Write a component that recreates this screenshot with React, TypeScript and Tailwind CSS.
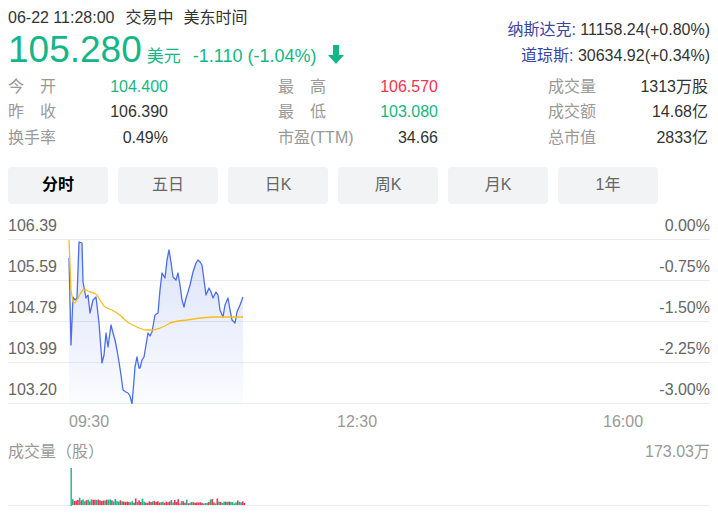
import React from "react";

const blue: [number, number][] = [
  [69, 258], [71, 345], [73, 297], [75, 300], [77, 298], [79, 242], [82, 243], [83, 282], [86, 298], [88, 295],
  [90, 313], [93, 300], [96, 297], [99, 323], [102, 363], [104, 355], [106, 333], [108, 347], [111, 325], [113, 333],
  [115, 340], [117, 350], [119, 362], [121, 375], [123, 390], [126, 392], [128, 393], [130, 396], [132, 404], [134, 380],
  [135, 367], [137, 357], [139, 368], [140, 368], [142, 360], [144, 357], [146, 345], [148, 333], [150, 336], [152, 332],
  [155, 315], [158, 313], [160, 290], [162, 273], [165, 278], [167, 260], [169, 250], [171, 262], [173, 277], [176, 280],
  [178, 273], [180, 285], [182, 300], [184, 307], [186, 298], [188, 292], [190, 285], [193, 272], [196, 263], [198, 260],
  [200, 262], [202, 265], [204, 280], [206, 295], [209, 288], [211, 292], [213, 298], [216, 292], [218, 295], [220, 310],
  [223, 317], [225, 305], [228, 298], [230, 310], [232, 320], [235, 323], [237, 312], [240, 305], [243, 297],
];

const avg: [number, number][] = [
  [69, 240], [70, 265], [71, 290], [73, 302], [75, 303], [77, 300], [80, 294], [83, 290], [86, 290], [90, 292],
  [94, 293], [97, 295], [100, 300], [104, 306], [107, 308], [112, 310], [117, 313], [121, 316], [125, 320], [129, 323],
  [133, 325], [139, 328], [145, 330], [153, 330], [160, 328], [165, 326], [170, 323], [178, 321], [187, 320], [200, 318],
  [213, 317], [243, 317],
];

const pts = (a: [number, number][]) => a.map(([x, y]) => `${x},${y}`).join(" ");

// volume bars, deterministic
const bars = (() => {
  let s = 11;
  const rnd = () => {
    s = (s * 9301 + 49297) % 233280;
    return s / 233280;
  };
  const out: { x: number; h: number; c: string }[] = [];
  for (let x = 72; x < 245; x += 1.7) {
    const base = x < 115 ? 3.5 : x < 175 ? 2 : 1.5;
    const spike = rnd() > 0.9 ? 2.5 : 0;
    out.push({
      x,
      h: base + rnd() * 2.5 + spike,
      c: rnd() > 0.5 ? "#f2334d" : "#13b787",
    });
  }
  return out;
})();

const stats = [
  [
    { label: ["今", "开"], value: "104.400", color: "text-[#13b787]" },
    { label: ["昨", "收"], value: "106.390", color: "text-[#333]" },
    { label: ["换手率"], value: "0.49%", color: "text-[#333]" },
  ],
  [
    { label: ["最", "高"], value: "106.570", color: "text-[#f2334d]" },
    { label: ["最", "低"], value: "103.080", color: "text-[#13b787]" },
    { label: ["市盈(TTM)"], value: "34.66", color: "text-[#333]" },
  ],
  [
    { label: ["成交量"], value: "1313万股", color: "text-[#333]" },
    { label: ["成交额"], value: "14.68亿", color: "text-[#333]" },
    { label: ["总市值"], value: "2833亿", color: "text-[#333]" },
  ],
];

const tabs = ["分时", "五日", "日K", "周K", "月K", "1年"];

const axis = [
  ["106.39", "0.00%"],
  ["105.59", "-0.75%"],
  ["104.79", "-1.50%"],
  ["103.99", "-2.25%"],
  ["103.20", "-3.00%"],
];

export default function App() {
  return (
    <div className="w-[718px] h-[516px] overflow-hidden bg-white font-['Liberation_Sans','Noto_Sans_CJK_SC',sans-serif] text-[16px] text-[#333]">
      {/* 头部行情 */}
      <div className="flex justify-between px-2">
        <div className="pt-2">
          <p className="h-5 leading-5">
            06-22 11:28:00<span className="ml-[11px]">交易中</span>
            <span className="ml-[10px]">美东时间</span>
          </p>
          <div className="mt-[2px] flex items-baseline h-10 leading-10 text-[#13b787]">
            <span className="text-[37px]">105.280</span>
            <span className="ml-[5px] text-[17px]">美元</span>
            <span className="ml-[12px] text-[18px]">-1.110 (-1.04%)</span>
            <svg className="ml-[12px] self-center mt-[8px]" width="16" height="19" viewBox="0 0 16 19">
              <path d="M5 0h6v10h5l-8 9-8-9h5z" fill="#13b787" />
            </svg>
          </div>
        </div>
        <div className="pt-[17px] text-right leading-[26px]">
          <p>
            <span className="text-[#3a46a6]">纳斯达克:</span> 11158.24(+0.80%)
          </p>
          <p>
            <span className="text-[#3a46a6]">道琼斯:</span> 30634.92(+0.34%)
          </p>
        </div>
      </div>

      {/* 统计 */}
      <div className="mt-1 flex px-2">
        {stats.map((col, i) => (
          <div key={i} className="w-[270px] last:w-[160px]">
            {col.map((s) => (
              <div key={s.value} className="flex w-[160px] h-[25.5px] items-center justify-between">
                {s.label.length === 2 ? (
                  <span className="flex w-[48px] justify-between text-[#999]">
                    <span>{s.label[0]}</span>
                    <span>{s.label[1]}</span>
                  </span>
                ) : (
                  <span className="text-[#999]">{s.label[0]}</span>
                )}
                <span className={s.color}>{s.value}</span>
              </div>
            ))}
          </div>
        ))}
      </div>

      {/* 切换 */}
      <div className="mt-4 flex gap-[10px] px-2">
        {tabs.map((t, i) => (
          <div
            key={t}
            className={`flex h-[37px] w-[100px] items-center justify-center rounded bg-[#f2f3f5] ${
              i === 0 ? "font-bold text-black" : "text-[#666]"
            }`}
          >
            {t}
          </div>
        ))}
      </div>

      {/* 分时图 */}
      <div className="relative px-2">
        {axis.map(([l, r], i) => (
          <div
            key={l}
            className={`flex items-end justify-between border-b border-[#ececec] pb-[3px] leading-5 text-[#666] ${
              i === 0 ? "h-[36px]" : "h-[41px]"
            }`}
          >
            <span>{l}</span>
            <span>{r}</span>
          </div>
        ))}
        <svg className="absolute left-0 top-0" width="718" height="200" viewBox="0 204 718 200">
          <defs>
            <linearGradient id="fill" x1="0" y1="240" x2="0" y2="404" gradientUnits="userSpaceOnUse">
              <stop offset="0" stopColor="#4a6ee8" stopOpacity="0.2" />
              <stop offset="1" stopColor="#4a6ee8" stopOpacity="0.02" />
            </linearGradient>
          </defs>
          <polygon points={pts([...blue, [243, 404], [69, 404]])} fill="url(#fill)" />
          <polyline points={pts(blue)} fill="none" stroke="#4a6ee8" strokeWidth="1.3" strokeLinejoin="round" />
          <polyline points={pts(avg)} fill="none" stroke="#f7bd1e" strokeWidth="1.3" strokeLinejoin="round" />
        </svg>
      </div>
      <div className="flex h-[36px] items-center pl-[69px] text-[#999]">
        <span className="w-[268px]">09:30</span>
        <span className="w-[266px]">12:30</span>
        <span>16:00</span>
      </div>

      {/* 成交量 */}
      <div className="mt-[2px] flex h-5 items-center justify-between px-2 text-[#999]">
        <span>成交量（股）</span>
        <span>173.03万</span>
      </div>
      <div className="relative px-2">
        <div className="h-[44px] border-b border-[#ececec]" />
        <svg className="absolute left-0 top-0" width="718" height="44" viewBox="0 462 718 44">
          <rect x="70.5" y="468" width="1.4" height="38" fill="#13b787" />
          {bars.map((b, i) => (
            <rect key={i} x={b.x} y={505 - b.h} width="1.6" height={b.h} fill={b.c} />
          ))}
        </svg>
      </div>
    </div>
  );
}
